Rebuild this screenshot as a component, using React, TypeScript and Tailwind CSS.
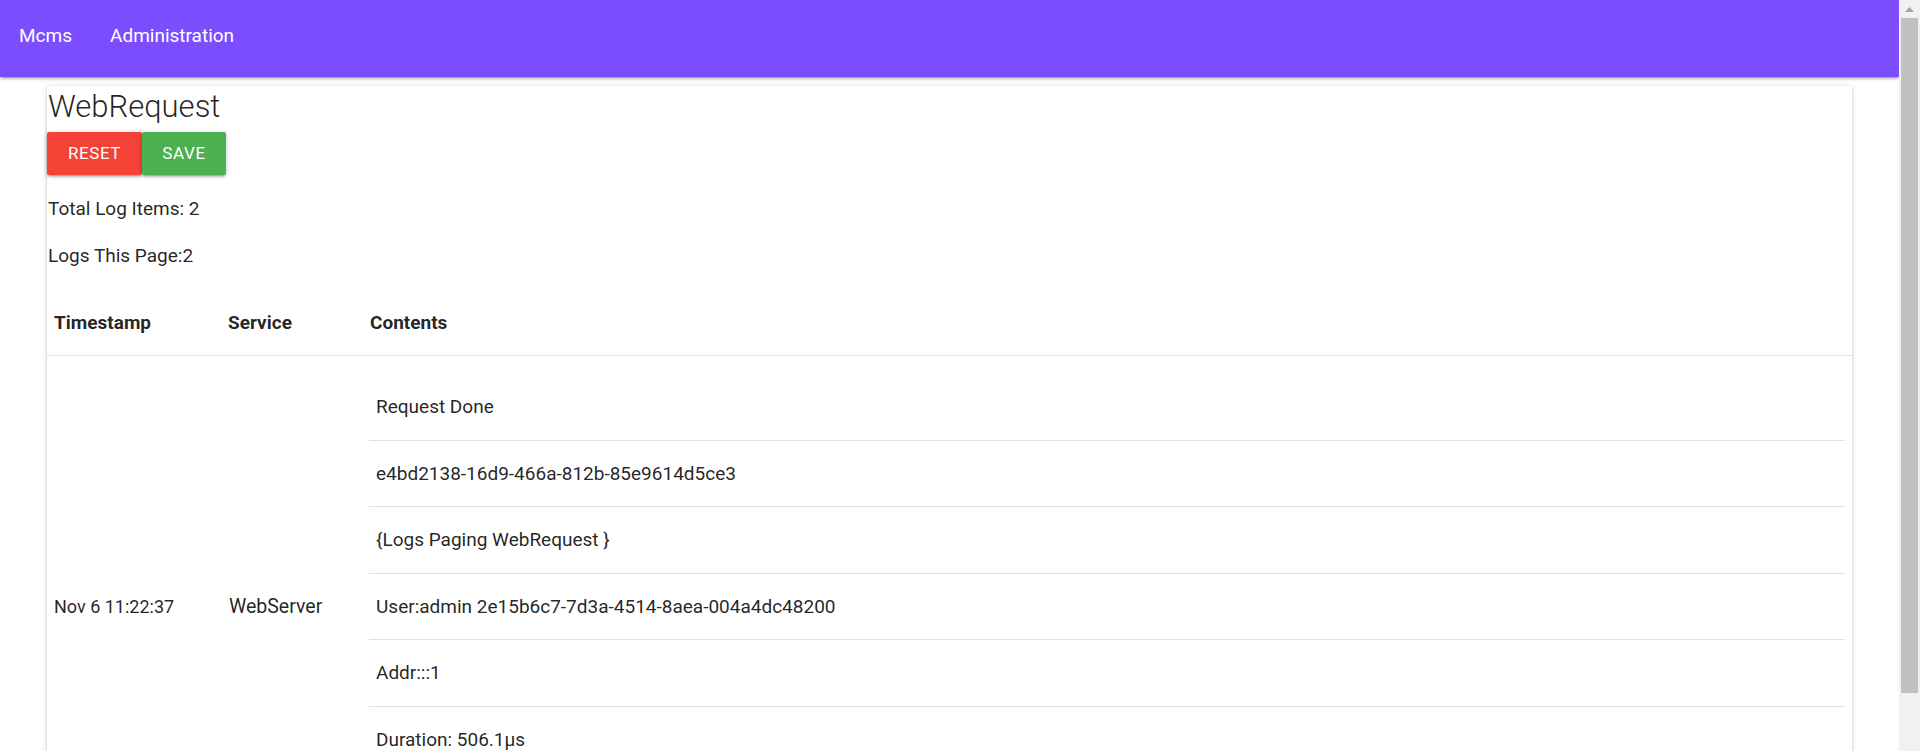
import React from 'react';

type LogItem = {
    timestamp: string;
    service: string;
    contents: string[];
};

const logs: LogItem[] = [
    {
        timestamp: 'Nov 6 11:22:37',
        service: 'WebServer',
        contents: [
            'Request Done',
            'e4bd2138-16d9-466a-812b-85e9614d5ce3',
            '{Logs Paging WebRequest }',
            'User:admin 2e15b6c7-7d3a-4514-8aea-004a4dc48200',
            'Addr:::1',
            'Duration: 506.1µs',
            'Status: 200',
        ],
    },
    {
        timestamp: 'Nov 6 11:22:31',
        service: 'WebServer',
        contents: [
            'Request Done',
            '9a1c7f02-3b4e-4d21-a8f6-1e0c5b7d9a44',
            '{Logs Paging WebRequest }',
            'User:admin 2e15b6c7-7d3a-4514-8aea-004a4dc48200',
            'Addr:::1',
            'Duration: 612.4µs',
            'Status: 200',
        ],
    },
];

const shadow =
    'shadow-[0_2px_2px_0_rgba(0,0,0,0.14),0_3px_1px_-2px_rgba(0,0,0,0.12),0_1px_5px_0_rgba(0,0,0,0.2)]';

const Scrollbar = () => (
    <div className="w-[21px] shrink-0 bg-[#f1f1f1] flex flex-col items-center">
        <div className="h-[18px] w-full flex items-center justify-center">
            <svg width="9" height="5" viewBox="0 0 9 5">
                <polygon points="4.5,0 9,5 0,5" fill="#a3a3a3" />
            </svg>
        </div>
        <div className="w-[17px] h-[675px] bg-[#c1c1c1]" />
    </div>
);

const App = () => {
    return (
        <div className="flex h-[751px] overflow-hidden bg-white font-['Roboto',sans-serif] text-[rgba(0,0,0,0.87)]">
            <div className="flex-1 min-w-0 overflow-hidden">
                {/* top nav */}
                <nav className={`relative z-10 h-[77px] bg-[#7c4dff] flex items-center pl-[19px] pb-[4px] gap-[38px] text-white text-[19px] ${shadow}`}>
                    <a href="#">Mcms</a>
                    <a href="#">Administration</a>
                </nav>

                <main className="px-[47px] pt-[9px]">
                    <div className={`bg-white rounded-[2px] ${shadow}`}>
                        <h5 className="pt-[5px] pl-[1px] text-[31px] font-light leading-[32px]">WebRequest</h5>

                        <div className="flex mt-[9px]">
                            <button className={`w-[95px] h-[43px] rounded-[2px] bg-[#f44336] text-white text-[17px] uppercase tracking-[0.6px] ${shadow}`}>
                                Reset
                            </button>
                            <button className={`w-[84px] h-[43px] rounded-[2px] bg-[#4caf50] text-white text-[17px] uppercase tracking-[0.6px] ${shadow}`}>
                                Save
                            </button>
                        </div>

                        <p className="mt-[20px] pl-[1px] text-[19px] leading-[27px]">Total Log Items: {logs.length}</p>
                        <p className="mt-[20px] pl-[1px] text-[19px] leading-[27px]">Logs This Page:{logs.length}</p>

                        {/* table */}
                        <div className="mt-[21px]">
                            <div className="grid grid-cols-[175px_139px_1fr] h-[66px] items-center border-b border-[#e0e0e0] text-[19px] font-bold leading-[27px]">
                                <div className="pl-[7px]">Timestamp</div>
                                <div className="pl-[6px]">Service</div>
                                <div className="pl-[9px]">Contents</div>
                            </div>
                            {logs.map((log, i) => (
                                <div key={i} className="grid grid-cols-[175px_139px_1fr] items-center border-b border-[#e0e0e0] leading-[27px]">
                                    <div className="pl-[7px] text-[18px]">{log.timestamp}</div>
                                    <div className="pl-[7px] text-[19.5px]">{log.service}</div>
                                    <div className="pt-[18px] pb-[18px] pl-[8px] pr-[7px]">
                                        {log.contents.map((line, j) => (
                                            <div key={j} className="h-[66.5px] flex items-center pl-[7px] border-b border-[#e0e0e0] text-[19px] leading-[27px]">
                                                {line}
                                            </div>
                                        ))}
                                    </div>
                                </div>
                            ))}
                        </div>
                    </div>
                </main>
            </div>
            <Scrollbar />
        </div>
    );
};

export default App;
